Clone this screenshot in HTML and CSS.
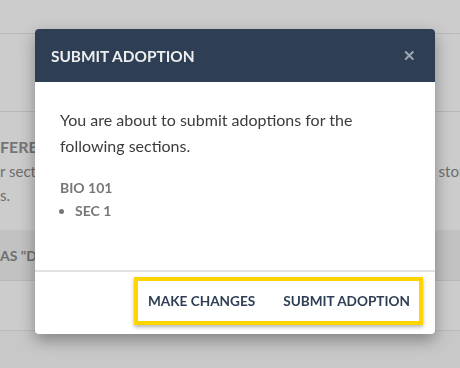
FILE: index.html
```html
<!DOCTYPE html>
<html>
<head>
<meta charset="utf-8">
<link rel="stylesheet" href="styles.css">
</head>
<body>
<div class="page">
  <div class="row top"></div>
  <div class="row second"></div>
  <div class="section">
    <div class="sec-title">FERENCES</div>
    <div class="sec-line"><span>r sections</span><span class="right">store</span></div>
    <div class="sec-line">s.</div>
  </div>
  <div class="band"><span>AS "DONE"</span></div>
  <div class="row third"></div>
  <div class="row fourth"></div>
</div>

<div class="modal">
  <div class="modal-header">
    <h2 class="modal-title">SUBMIT ADOPTION</h2>
    <span class="close">&#x2715;</span>
  </div>
  <div class="modal-body">
    <p class="intro">You are about to submit adoptions for the following sections.</p>
    <div class="course">BIO 101</div>
    <ul class="sections">
      <li>SEC 1</li>
    </ul>
  </div>
  <div class="modal-footer">
    <div class="actions">
      <button class="btn">MAKE CHANGES</button>
      <button class="btn">SUBMIT ADOPTION</button>
    </div>
  </div>
</div>
</body>
</html>
```

FILE: styles.css
```css
html, body {
  margin: 0;
  padding: 0;
  background: #cccccc;
  font-family: Lato, "Open Sans", sans-serif;
  overflow: hidden;
}
.page {
  width: 460px;
  height: 368px;
  display: flex;
  flex-direction: column;
}
.row.top {
  height: 33px;
  border-bottom: 1px solid #b9b9b9;
  flex: none;
}
.row.second {
  height: 77px;
  border-bottom: 1px solid #b9b9b9;
  flex: none;
}
.section {
  height: 118px;
  flex: none;
  color: #6e6e6e;
  padding-top: 26px;
  box-sizing: border-box;
}
.sec-title {
  font-weight: 700;
  font-size: 16px;
  line-height: 18px;
  color: #757575;
}
.sec-line {
  font-size: 15px;
  line-height: 26px;
  display: flex;
  justify-content: space-between;
  margin-top: 2px;
  margin-right: -12px;
}
.sec-line + .sec-line {
  margin-top: -2px;
}
.band {
  height: 50px;
  background: #c2c2c2;
  flex: none;
  display: flex;
  align-items: center;
  font-weight: 700;
  font-size: 14px;
  color: #6e6e6e;
}
.row.third {
  height: 49px;
  border-top: 1px solid #b9b9b9;
  border-bottom: 1px solid #b9b9b9;
  flex: none;
}
.row.fourth {
  flex: 1;
  background: #c8c8c8;
}

.modal {
  position: fixed;
  left: 35px;
  top: 29px;
  width: 400px;
  background: #fff;
  border-radius: 4px;
  box-shadow: 0 6px 16px rgba(0, 0, 0, 0.35);
  overflow: hidden;
}
.modal-header {
  height: 53px;
  background: #2e3e55;
  display: flex;
  align-items: center;
  justify-content: space-between;
  padding: 0 19px 0 16px;
}
.modal-title {
  margin: 0;
  font-size: 15.4px;
  font-weight: 700;
  color: #eeeeee;
}
.close {
  color: #9ca4b0;
  font-size: 15px;
  font-weight: 700;
  line-height: 1;
}
.modal-body {
  padding: 25px 25px 50px;
}
.intro {
  margin: 0;
  font-size: 16px;
  line-height: 26px;
  color: #3c3c3c;
}
.course {
  margin-top: 19px;
  font-weight: 700;
  font-size: 14px;
  color: #777;
  line-height: 20px;
}
.sections {
  margin: 4px 0 0;
  padding-left: 15px;
  color: #777;
  font-weight: 700;
  font-size: 14px;
  line-height: 18px;
}
.modal-footer {
  border-top: 2px solid #e2e2e2;
  display: flex;
  justify-content: flex-end;
  padding: 5px 12px 9px;
}
.actions {
  display: flex;
  gap: 28px;
  border: 4px solid #ffd500;
  padding: 0 9px 0 10px;
  height: 40px;
  align-items: center;
  box-shadow: 0 2px 4px rgba(0, 0, 0, 0.3);
}
.btn {
  background: none;
  border: 0;
  font-family: Lato, "Open Sans", sans-serif;
  font-weight: 700;
  font-size: 13.6px;
  color: #2e3e55;
  padding: 0;
}
```
